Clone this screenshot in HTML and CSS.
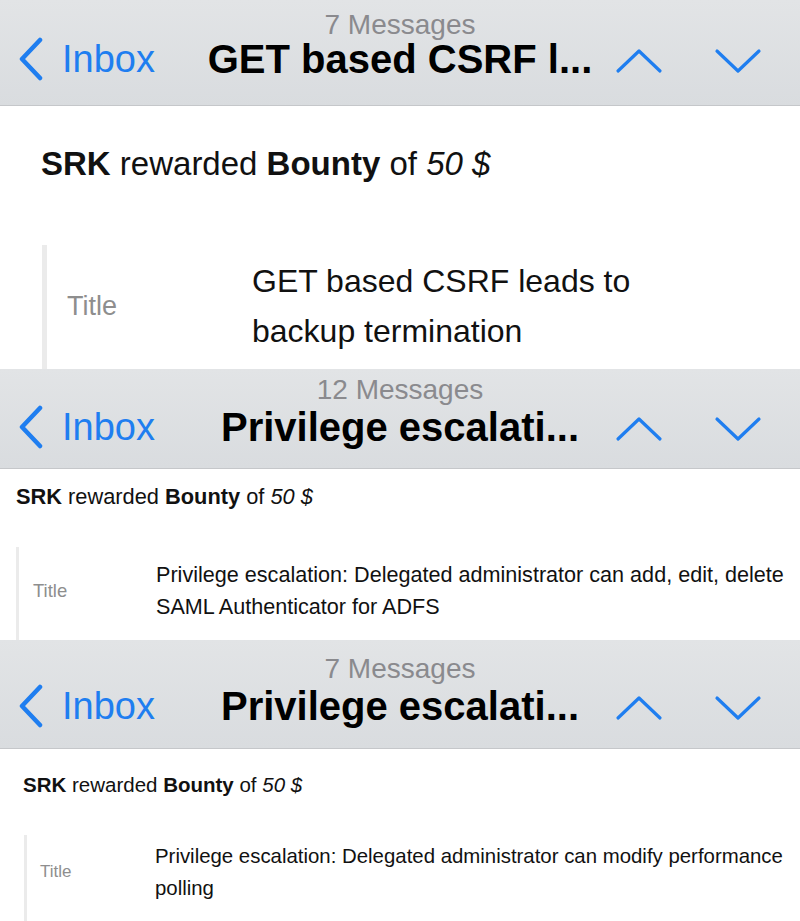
FILE: index.html
```html
<!DOCTYPE html>
<html>
<head>
<meta charset="utf-8">
<link rel="stylesheet" href="styles.css">
</head>
<body>
<section class="shot shot-1">
  <header class="bar bar-1">
    <div class="count">7 Messages</div>
    <div class="row">
      <div class="back">
        <svg class="back-ico" width="28" height="44" viewBox="0 0 28 44"><path d="M23 3 L5 22 L23 41"/></svg>
        <span class="back-label">Inbox</span>
      </div>
      <div class="title">GET based CSRF l...</div>
      <div class="nav">
        <svg class="nav-ico" width="48" height="28" viewBox="0 0 48 28"><path d="M3 24 L24 4 L45 24"/></svg>
        <svg class="nav-ico" width="48" height="28" viewBox="0 0 48 28"><path d="M3 4 L24 24 L45 4"/></svg>
      </div>
    </div>
  </header>
  <div class="body body-1">
    <p class="lead"><b>SRK</b> rewarded <b>Bounty</b> of <i>50 $</i></p>
    <div class="field">
      <div class="label">Title</div>
      <div class="value">GET based CSRF leads to backup termination</div>
    </div>
  </div>
</section>

<section class="shot shot-2">
  <header class="bar bar-2">
    <div class="count">12 Messages</div>
    <div class="row">
      <div class="back">
        <svg class="back-ico" width="28" height="44" viewBox="0 0 28 44"><path d="M23 3 L5 22 L23 41"/></svg>
        <span class="back-label">Inbox</span>
      </div>
      <div class="title">Privilege escalati...</div>
      <div class="nav">
        <svg class="nav-ico" width="48" height="28" viewBox="0 0 48 28"><path d="M3 24 L24 4 L45 24"/></svg>
        <svg class="nav-ico" width="48" height="28" viewBox="0 0 48 28"><path d="M3 4 L24 24 L45 4"/></svg>
      </div>
    </div>
  </header>
  <div class="body body-2">
    <p class="lead"><b>SRK</b> rewarded <b>Bounty</b> of <i>50 $</i></p>
    <div class="field">
      <div class="label">Title</div>
      <div class="value">Privilege escalation: Delegated administrator can add, edit, delete SAML Authenticator for ADFS</div>
    </div>
  </div>
</section>

<section class="shot shot-3">
  <header class="bar bar-3">
    <div class="count">7 Messages</div>
    <div class="row">
      <div class="back">
        <svg class="back-ico" width="28" height="44" viewBox="0 0 28 44"><path d="M23 3 L5 22 L23 41"/></svg>
        <span class="back-label">Inbox</span>
      </div>
      <div class="title">Privilege escalati...</div>
      <div class="nav">
        <svg class="nav-ico" width="48" height="28" viewBox="0 0 48 28"><path d="M3 24 L24 4 L45 24"/></svg>
        <svg class="nav-ico" width="48" height="28" viewBox="0 0 48 28"><path d="M3 4 L24 24 L45 4"/></svg>
      </div>
    </div>
  </header>
  <div class="body body-3">
    <p class="lead"><b>SRK</b> rewarded <b>Bounty</b> of <i>50 $</i></p>
    <div class="field">
      <div class="label">Title</div>
      <div class="value">Privilege escalation: Delegated administrator can modify performance polling</div>
    </div>
  </div>
</section>
</body>
</html>
```

FILE: styles.css
```css
* { box-sizing: border-box; }
html, body { margin: 0; padding: 0; background: #fff; }
body { font-family: "Liberation Sans", Arial, sans-serif; color: #111; width: 800px; }

.shot { overflow: hidden; background: #fff; }
.shot-1 { height: 369px; }
.shot-2 { height: 271px; }
.shot-3 { height: 281px; }

.bar {
  background: linear-gradient(#e2e4e6, #d9dcdf);
  border-bottom: 1px solid #c5c7ca;
}
.bar-1 { padding: 13px 0 34px; }
.bar-2 { padding: 9px 0 29px; }
.bar-3 { padding: 17px 0 30px; }

.count {
  text-align: center;
  font-size: 28px;
  line-height: 24px;
  color: #8a8a8e;
}
.row {
  display: grid;
  grid-template-columns: 1fr auto 1fr;
  align-items: center;
  height: 34px;
  margin-top: 3px;
}
.bar-1 .row { margin-top: 0; }

.back {
  display: flex;
  align-items: center;
  gap: 17px;
  padding-left: 17px;
}
.back-ico path, .nav-ico path {
  fill: none;
  stroke: #1f7ef0;
  stroke-linecap: round;
  stroke-linejoin: round;
}
.back-ico path { stroke-width: 4.5; }
.nav-ico path { stroke-width: 3.2; }
.back-label {
  font-size: 38px;
  line-height: 34px;
  color: #1f7ef0;
}
.title {
  font-size: 40px;
  line-height: 34px;
  font-weight: bold;
  color: #000;
  white-space: nowrap;
}
.nav {
  display: flex;
  justify-content: flex-end;
  align-items: center;
  gap: 51px;
  padding: 4px 38px 0 0;
}

.lead { margin: 0; }
.lead i { font-style: italic; }
.field {
  display: grid;
  align-items: center;
  border-left-style: solid;
  border-left-color: #ebebeb;
}
.label { color: #8e8e8e; }
.value { color: #111; }

/* panel 1 */
.body-1 { padding: 38px 0 0 41px; }
.body-1 .lead { font-size: 33px; line-height: 40px; }
.body-1 .field {
  margin: 61px 0 0 1px;
  border-left-width: 5px;
  padding: 11px 0 20px 20px;
  grid-template-columns: 185px 480px;
}
.body-1 .label { font-size: 27px; }
.body-1 .value { font-size: 32px; line-height: 50px; }

/* panel 2 */
.body-2 { padding: 15px 0 0 16px; }
.body-2 .lead { font-size: 21.8px; line-height: 26px; }
.body-2 .field {
  margin-top: 37px;
  border-left-width: 3px;
  padding: 12px 0 20px 14px;
  grid-template-columns: 123px 1fr;
}
.body-2 .label { font-size: 18.5px; }
.body-2 .value { font-size: 21.6px; line-height: 32px; }

/* panel 3 */
.body-3 { padding: 24px 0 0 23px; }
.body-3 .lead { font-size: 20.5px; line-height: 24px; }
.body-3 .field {
  margin: 38px 0 0 1px;
  border-left-width: 3px;
  padding: 5px 0 20px 13px;
  grid-template-columns: 115px 1fr;
}
.body-3 .label { font-size: 17px; }
.body-3 .value { font-size: 20.4px; line-height: 32px; }
```
